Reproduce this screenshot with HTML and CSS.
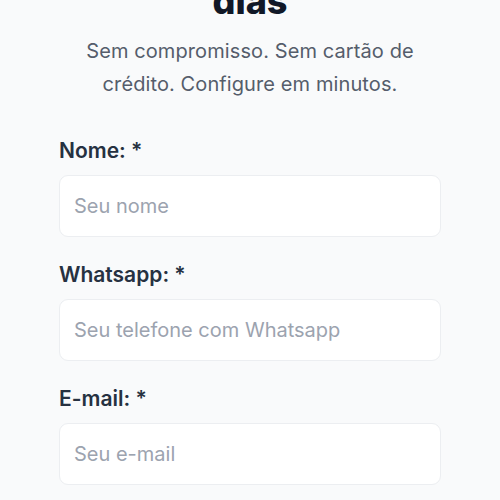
FILE: index.html
```html
<!DOCTYPE html>
<html lang="pt-BR">
<head>
  <meta charset="UTF-8">
  <meta name="viewport" content="width=device-width, initial-scale=1.0">
  <title>Teste grátis</title>
  <link rel="stylesheet" href="styles.css">
</head>
<body>
<div class="container">
  <h1 class="title">dias</h1>
  <p class="subtitle">Sem compromisso. Sem cartão de crédito. Configure em minutos.</p>

  <form class="signup">
    <div class="field">
      <label for="nome">Nome: *</label>
      <input type="text" id="nome" placeholder="Seu nome">
    </div>
    <div class="field">
      <label for="whatsapp">Whatsapp: *</label>
      <input type="tel" id="whatsapp" placeholder="Seu telefone com Whatsapp">
    </div>
    <div class="field">
      <label for="email">E-mail: *</label>
      <input type="email" id="email" placeholder="Seu e-mail">
    </div>
  </form>
</div>
</body>
</html>
```

FILE: styles.css
```css
body {
    font-family: Inter, "Noto Sans", sans-serif;
    margin: 0;
    background-color: #f9fafb;
    color: #1f2937;
}
.container {
    width: 382px;
    margin: 0 auto;
}
.title {
    font-size: 36px;
    line-height: 40px;
    font-weight: 800;
    color: #111827;
    text-align: center;
    margin: -19px 0 0;
}
.subtitle {
    font-size: 20px;
    line-height: 32.5px;
    letter-spacing: 0.1px;
    color: #555d6b;
    text-align: center;
    margin: 14px 0 37px;
}
.field {
    display: flex;
    flex-direction: column;
    margin-bottom: 24px;
}
label {
    font-size: 21px;
    line-height: 28px;
    font-weight: 600;
    color: #263141;
    margin-bottom: 10px;
}
input {
    box-sizing: border-box;
    height: 62px;
    padding: 0 14px;
    font-family: inherit;
    font-size: 20px;
    color: #111827;
    background-color: #fff;
    border: 1px solid #eceef1;
    border-radius: 9px;
    outline: none;
}
input::placeholder {
    color: #9ca3af;
}
```
